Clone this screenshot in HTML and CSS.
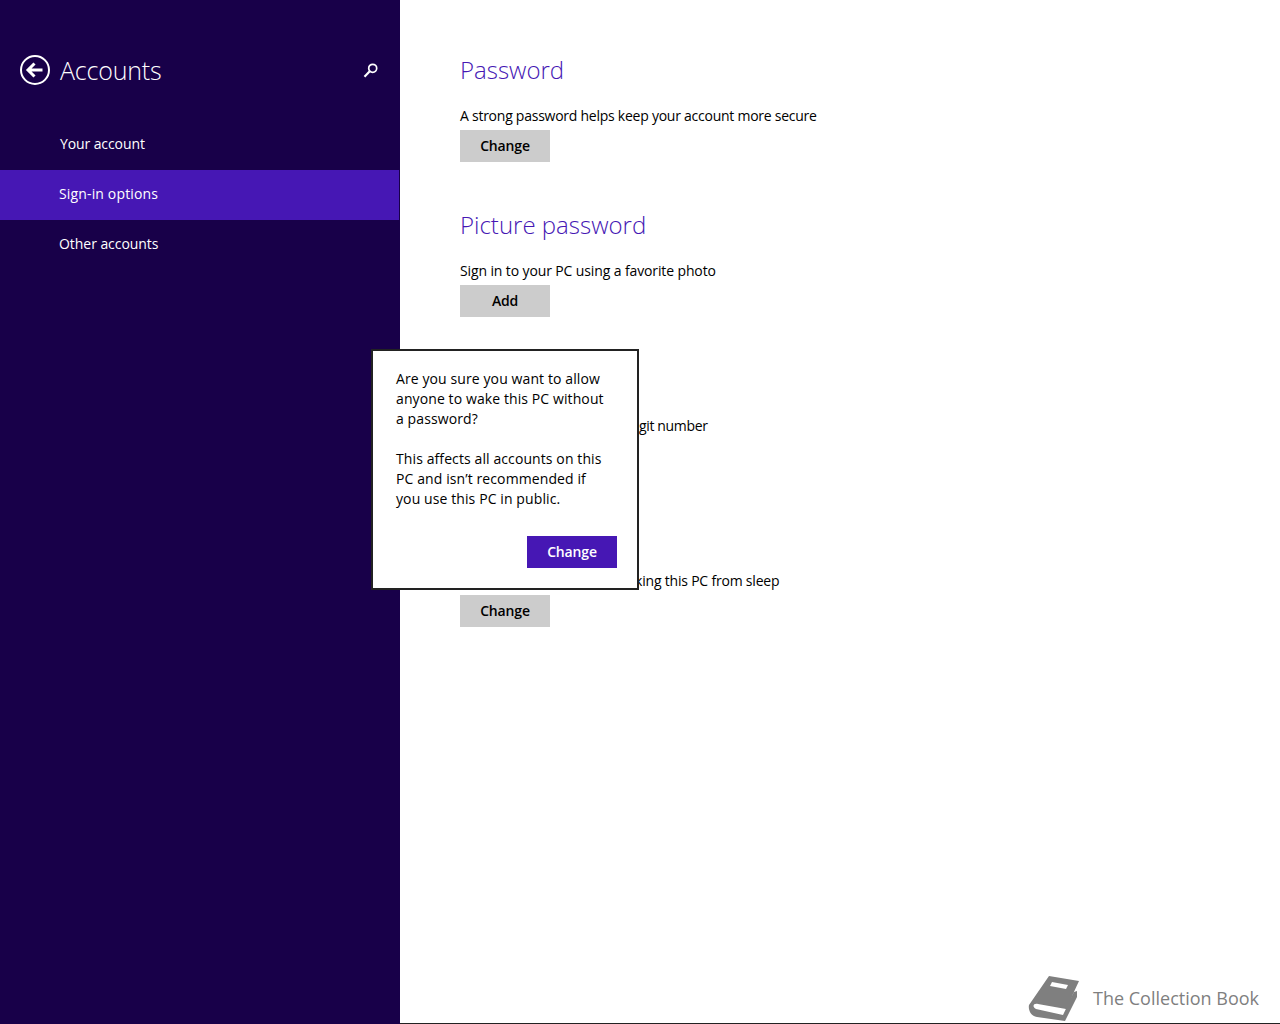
FILE: index.html
```html
<!DOCTYPE html>
<html lang="en">
<head>
<meta charset="utf-8">
<title>Accounts</title>
<link rel="stylesheet" href="styles.css">
</head>
<body>
<div class="screen">
  <aside class="sidebar">
    <header class="side-head">
      <svg class="back" width="32" height="32" viewBox="0 0 32 32" aria-hidden="true">
        <circle cx="16" cy="16" r="14" fill="none" stroke="#fff" stroke-width="2"/>
        <path d="M23.500 16H10M15.500 9.500L9 16l6.500 6.500" fill="none" stroke="#fff" stroke-width="3"/>
      </svg>
      <h1 class="side-title">Accounts</h1>
      <svg class="search" width="16" height="16" viewBox="0 0 16 16" aria-hidden="true">
        <circle cx="9.700" cy="6.300" r="4" fill="none" stroke="#fff" stroke-width="1.700"/>
        <path d="M6.700 9.300L1.500 14.700" fill="none" stroke="#fff" stroke-width="2.200"/>
      </svg>
    </header>
    <nav class="nav">
      <a class="nav-item nav-first">Your account</a>
      <a class="nav-item active">Sign-in options</a>
      <a class="nav-item">Other accounts</a>
    </nav>
  </aside>
  <main class="content">
    <section class="group">
      <h2 class="group-title">Password</h2>
      <p class="group-text">A strong password helps keep your account more secure</p>
      <button class="btn">Change</button>
    </section>
    <section class="group">
      <h2 class="group-title">Picture password</h2>
      <p class="group-text text-photo">Sign in to your PC using a favorite photo</p>
      <button class="btn">Add</button>
    </section>
    <section class="group">
      <div class="group-title"></div>
      <p class="group-text tail-pin">git number</p>
    </section>
    <section class="group">
      <div class="group-title"></div>
      <p class="group-text tail-wake">king this PC from sleep</p>
      <button class="btn">Change</button>
    </section>
  </main>
  <div class="dialog">
    <p class="dialog-text">Are you sure you want to allow<br>anyone to wake this PC without<br>a password?</p>
    <p class="dialog-text">This affects all accounts on this<br>PC and isn’t recommended if<br>you use this PC in public.</p>
    <div class="dialog-actions"><button class="btn btn-primary">Change</button></div>
  </div>
  <div class="watermark">
    <svg class="book" width="54" height="48" viewBox="3 2 54 48" aria-hidden="true">
      <path d="M25 4L55 9 42 37 14 32C9 31 8 35 12 37L39 43 50 20 53 19 53 25 41 49 13 45C7 44 4 38 5 33Z" fill="#7f7f7f"/>
      <path d="M28 10L44 13 42 17 26 14Z" fill="#fff"/>
    </svg>
    <span class="watermark-text">The Collection Book</span>
  </div>
</div>
</body>
</html>
```
FILE: styles.css
```css
* { box-sizing: border-box; }
html, body { margin: 0; height: 100%; overflow: hidden; }
body { font-family: "Open Sans", "Noto Sans", "Liberation Sans", sans-serif; background: #fff; color: #000; }
.screen { position: relative; display: flex; width: 1280px; height: 1024px; border-bottom: 1px solid #222; }
.sidebar { width: 400px; flex: none; height: 1024px; background: #180049; color: #fff; padding-top: 54px; }
.side-head { display: flex; align-items: center; height: 32px; padding-left: 19px; }
.back { flex: none; }
.side-title { margin: 0 0 0 9px; font-size: 25px; font-weight: 300; line-height: 32px; letter-spacing: -0.2px; flex: 1; }
.search { flex: none; margin-right: 21px; }
.nav { display: flex; flex-direction: column; margin-top: 34px; }
.nav-item { height: 50px; width: 399px; padding-left: 59px; font-size: 14px; line-height: 48px; letter-spacing: -0.05px; color: #fff; }
.nav-first { padding-left: 60px; letter-spacing: -0.1px; }
.nav-item.active { background: #4617b4; letter-spacing: 0.15px; }
.content { flex: 1; padding: 54px 0 0 60px; }
.group { height: 155px; }
.group-title { margin: 0; height: 32px; font-size: 24px; font-weight: 300; line-height: 32px; color: #4617b4; letter-spacing: 0; }
.group-text { margin: 0; padding-top: 20px; font-size: 14px; line-height: 20px; letter-spacing: -0.25px; white-space: nowrap; height: 44px; }
.text-photo { letter-spacing: -0.12px; }
.tail-pin { padding-left: 179px; letter-spacing: -0.35px; }
.tail-wake { padding-left: 175px; letter-spacing: -0.2px; }
.btn { display: block; width: 90px; height: 32px; padding: 0 0 1px; border: 0; background: #ccc; color: #000; font-family: inherit; font-size: 14px; font-weight: 600; letter-spacing: -0.15px; }
.btn-primary { background: #4617b4; color: #fff; }
.dialog { position: absolute; left: 371px; top: 349px; width: 268px; height: 241px; background: #fff; border: 2px solid #222; padding: 18px 20px 0 23px; }
.dialog-text { margin: 0 0 20px; font-size: 14px; line-height: 20px; letter-spacing: 0.1px; white-space: nowrap; }
.dialog-actions { display: flex; justify-content: flex-end; margin-top: 27px; }
.watermark { position: absolute; right: 21px; bottom: 0; display: flex; align-items: center; height: 50px; }
.book { flex: none; margin-right: 12px; }
.watermark-text { font-size: 18px; font-weight: 400; color: #7f7f7f; }
```
